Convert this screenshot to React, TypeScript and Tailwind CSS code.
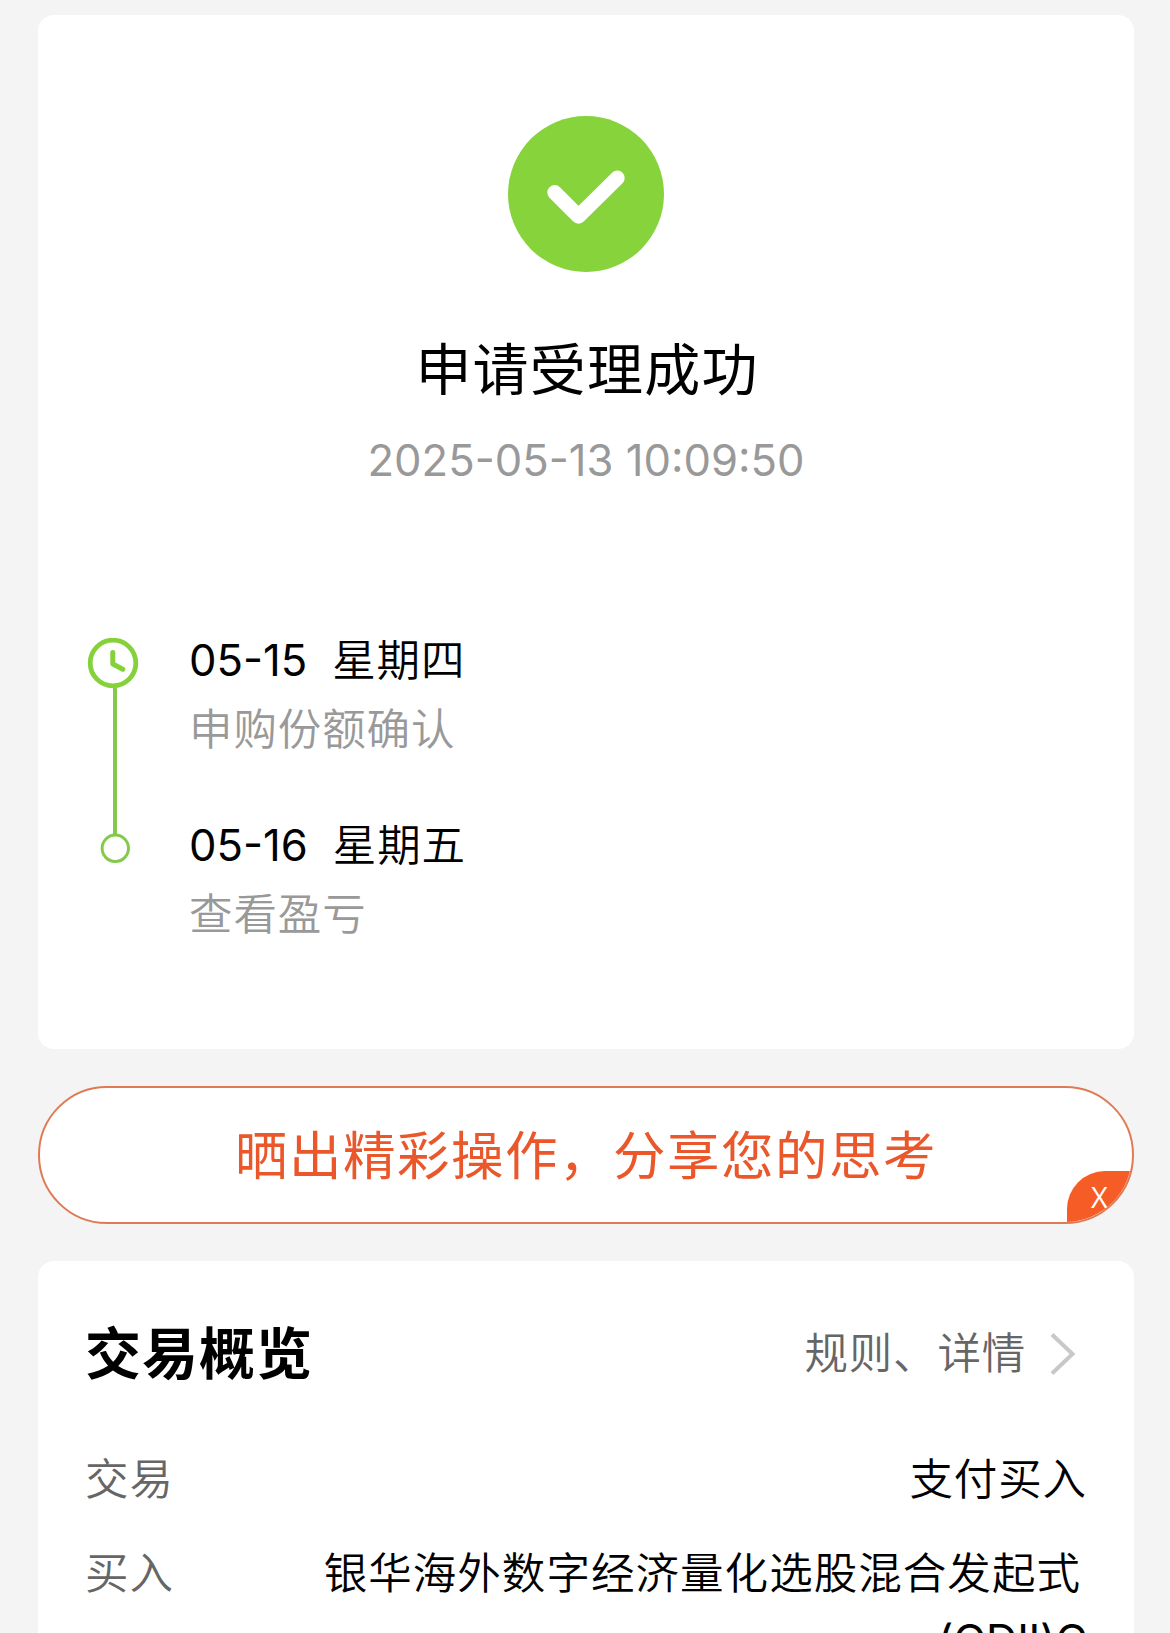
const steps = [
  { date: "05-15", day: "星期四", note: "申购份额确认" },
  { date: "05-16", day: "星期五", note: "查看盈亏" },
];

function SuccessIcon() {
  return (
    <svg className="h-[156px] w-[156px]" viewBox="0 0 156 156" fill="none">
      <circle cx="78" cy="78" r="78" fill="#87d33b" />
      <path d="M46.7 76.5 70.5 100.3 109.3 61.9" stroke="#fff" strokeWidth="14.8" strokeLinecap="round" strokeLinejoin="round" />
    </svg>
  );
}

function TimelineRail() {
  return (
    <svg className="h-[226px] w-[52px] shrink-0" viewBox="0 0 52 226" fill="none">
      <path d="M28 50V197" stroke="#84c94c" strokeWidth="4" />
      <circle cx="26" cy="25" r="22.8" stroke="#84d13a" strokeWidth="4.8" />
      <path d="M25.8 14.5V26L35.8 31.3" stroke="#84d13a" strokeWidth="5" strokeLinecap="round" strokeLinejoin="round" />
      <circle cx="28.3" cy="210.3" r="13.2" fill="#fff" stroke="#84c94c" strokeWidth="3" />
    </svg>
  );
}

export default function App() {
  return (
    <div className="flex h-[1633px] w-[1170px] flex-col overflow-hidden bg-[#f4f4f4] pt-[15px] pr-9 pl-[38px] font-['Inter','Noto_Sans_CJK_SC',sans-serif] font-[350] text-black">
      <section className="flex h-[1034px] shrink-0 flex-col rounded-2xl bg-white pt-[101px]">
        <div className="flex flex-col items-center">
          <SuccessIcon />
          <h1 className="mt-[58px] pl-[2px] text-[56px] leading-[80px] font-normal tracking-[1.2px]">申请受理成功</h1>
          <p className="mt-[21px] text-[43.6px] leading-[60px] font-normal text-[#999]">2025-05-13 10:09:50</p>
        </div>
        <div className="mt-[147px] flex pl-[49px]">
          <TimelineRail />
          <ol className="ml-[50px] pt-[1px]">
            {steps.map((s) => (
              <li key={s.date} className="h-[185px]">
                <div className="flex h-[44px] items-center gap-[25px] whitespace-nowrap">
                  <span className="text-[43.6px] font-normal">{s.date}</span>
                  <span className="text-[43.5px] tracking-[0.8px]">{s.day}</span>
                </div>
                <div className="mt-[25px] flex h-[44px] items-center text-[43.5px] tracking-[0.9px] text-[#999]">{s.note}</div>
              </li>
            ))}
          </ol>
        </div>
      </section>

      <div className="relative mt-[37px] flex h-[138px] shrink-0 items-center justify-center overflow-hidden rounded-full border-2 border-[#df7a55] bg-white pt-[2px] text-[52.5px] font-normal tracking-[1.5px] text-[#e9572b]">
        晒出精彩操作，分享您的思考
        <button className="absolute -right-[2px] -bottom-[2px] flex h-[53px] w-[67px] items-center justify-center rounded-tl-[38px] bg-[#f65d26] pr-[2px] pb-[2px] font-['Open_Sans'] text-[29px] tracking-normal text-white">
          X
        </button>
      </div>

      <section className="mt-[37px] h-[500px] shrink-0 rounded-t-2xl bg-white pt-[50px] pr-[47px] pl-[47px]">
        <div className="flex h-[84px] items-center justify-between">
          <h2 className="pt-[1px] text-[56px] font-bold tracking-[1px]">交易概览</h2>
          <div className="flex items-center gap-[24px] pt-[2px] pr-[11px] text-[43.5px] tracking-[0.8px] text-[#666]">
            规则、详情
            <svg className="h-[44px] w-[26px]" viewBox="0 0 26 44" fill="none">
              <path d="M2 2.5 22.5 22 2 41.5" stroke="#c8c8c8" strokeWidth="4" />
            </svg>
          </div>
        </div>
        <dl className="mt-[49px] text-[43.5px] leading-[70px] tracking-[0.9px]">
          <div className="flex justify-between">
            <dt className="text-[#666]">交易</dt>
            <dd>支付买入</dd>
          </div>
          <div className="mt-[24px] flex justify-between">
            <dt className="text-[#666]">买入</dt>
            <dd className="w-[770px] text-right">
              <span className="block pr-[6px] tracking-[1.05px] whitespace-nowrap">银华海外数字经济量化选股混合发起式</span>
              <span className="-mt-[3px] block font-normal tracking-[-0.3px]">(QDII)C</span>
            </dd>
          </div>
        </dl>
      </section>
    </div>
  );
}
